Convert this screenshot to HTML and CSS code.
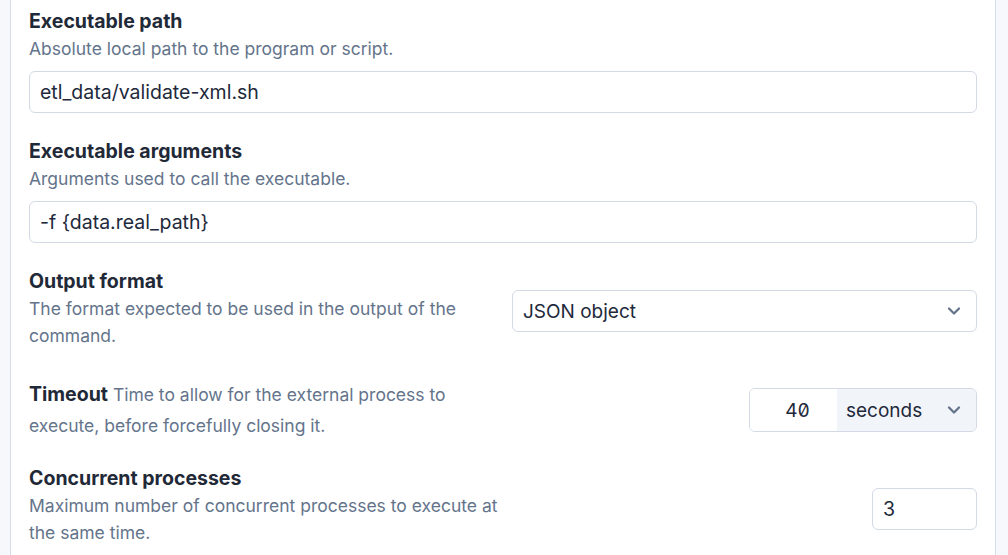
FILE: index.html
```html
<!DOCTYPE html>
<html lang="en">
<head>
<meta charset="utf-8">
<title>Executable settings</title>
<link rel="stylesheet" href="styles.css">
</head>
<body>
<div class="page">
  <div class="card">
    <div class="field">
      <div class="label">Executable path</div>
      <div class="desc">Absolute local path to the program or script.</div>
      <div class="input wide">etl_data/validate-xml.sh</div>
    </div>

    <div class="field">
      <div class="label">Executable arguments</div>
      <div class="desc">Arguments used to call the executable.</div>
      <div class="input wide">-f {data.real_path}</div>
    </div>

    <div class="field split">
      <div class="text">
        <div class="label">Output format</div>
        <div class="desc">The format expected to be used in the output of the command.</div>
      </div>
      <div class="select">
        <span>JSON object</span>
        <svg class="chev" viewBox="0 0 16 16" width="16" height="16"><path d="M3 5.5 8 10.5 13 5.5" fill="none" stroke="currentColor" stroke-width="2.3" stroke-linecap="round" stroke-linejoin="round"/></svg>
      </div>
    </div>

    <div class="field row timeout">
      <div class="text inline"><span class="label-in">Timeout</span> <span class="inline-desc">Time to allow for the external process to execute, before forcefully closing it.</span></div>
      <div class="group">
        <div class="num">40</div>
        <div class="unit">
          <span>seconds</span>
          <svg class="chev" viewBox="0 0 16 16" width="16" height="16"><path d="M3 5.5 8 10.5 13 5.5" fill="none" stroke="currentColor" stroke-width="2.3" stroke-linecap="round" stroke-linejoin="round"/></svg>
        </div>
      </div>
    </div>

    <div class="field row">
      <div class="text">
        <div class="label">Concurrent processes</div>
        <div class="desc">Maximum number of concurrent processes to execute at the same time.</div>
      </div>
      <div class="input small">3</div>
    </div>
  </div>
</div>
</body>
</html>
```

FILE: styles.css
```css
* { box-sizing: border-box; }
html, body {
  margin: 0;
  padding: 0;
  background: #f7f8fb;
  font-family: Inter, "Noto Sans", sans-serif;
  color: #1e293b;
}
.page {
  padding: 0 12px 0 10px;
  height: 555px;
  overflow: hidden;
}
.card {
  background: #ffffff;
  border-left: 1px solid #d5dde9;
  border-right: 1px solid #d5dde9;
  padding: 9px 18px 20px 18px;
  display: flex;
  flex-direction: column;
}
.field { margin-bottom: 26px; }
.label {
  font-size: 19.5px;
  font-weight: 700;
  line-height: 24px;
  color: #1f2937;
}
.desc {
  font-size: 17.5px;
  line-height: 27px;
  color: #64748b;
  margin-top: 2px;
}
.input {
  border: 1px solid #d3dae5;
  border-radius: 6px;
  height: 42px;
  padding: 0 10px;
  display: flex;
  align-items: center;
  font-size: 19.5px;
  color: #1e293b;
  background: #fff;
}
.input.wide { margin-top: 9px; }
.split {
  display: grid;
  grid-template-columns: 1fr 1fr;
  column-gap: 18px;
  margin-bottom: 30px;
}
.select {
  margin-top: 21px;
  height: 42px;
  border: 1px solid #d3dae5;
  border-radius: 6px;
  padding: 0 14px 0 10px;
  display: flex;
  align-items: center;
  justify-content: space-between;
  font-size: 19px;
  color: #1e293b;
}
.chev { color: #64748b; display: block; }
.row {
  display: flex;
  align-items: center;
  justify-content: space-between;
}
.row .text { width: 476px; }
.timeout { margin-bottom: 25px; }
.inline {
  font-size: 17.5px;
  line-height: 31px;
  color: #64748b;
}
.label-in {
  font-size: 19.5px;
  font-weight: 700;
  color: #1f2937;
}
.inline-desc { color: #64748b; }
.group {
  display: flex;
  width: 228px;
  height: 44px;
  border: 1px solid #d3dae5;
  border-radius: 6px;
  overflow: hidden;
}
.num {
  width: 87px;
  display: flex;
  align-items: center;
  justify-content: center;
  font-size: 19px;
  font-feature-settings: "zero" 1, "tnum" 1;
  padding-left: 8px;
  background: #fff;
}
.unit {
  flex: 1;
  background: #f1f4f9;
  display: flex;
  align-items: center;
  justify-content: space-between;
  padding: 0 14px 0 9px;
  font-size: 19px;
}
.input.small {
  width: 105px;
  height: 42px;
  margin-top: 6px;
}
```
